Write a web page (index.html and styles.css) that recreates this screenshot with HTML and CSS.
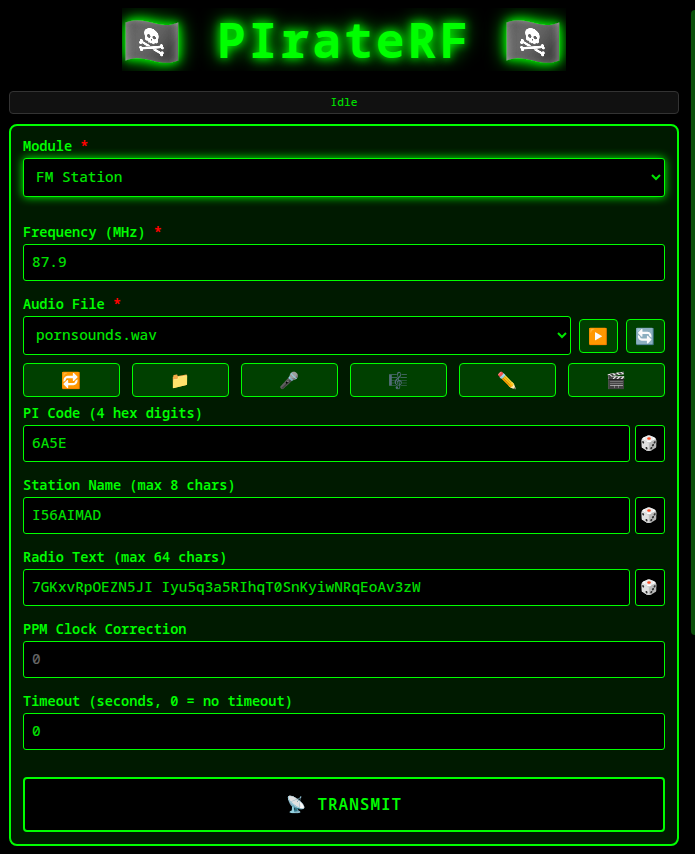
FILE: index.html
```html
<!DOCTYPE html>
<html>
<head>
  <title>PIrateRF</title>
  <link rel="stylesheet" href="styles.css">
</head>
<body>
  <header class="header">
    <h1 class="title"><span class="flag">🏴‍☠️</span> PIrateRF <span class="flag">🏴‍☠️</span></h1>
  </header>
  <div class="status">Idle</div>

  <main class="card">
    <div class="group module-group">
      <label class="label">Module <span class="req">*</span></label>
      <select class="field select glow"><option>FM Station</option></select>
    </div>

    <div class="group">
      <label class="label">Frequency (MHz) <span class="req">*</span></label>
      <input class="field" value="87.9">
    </div>

    <div class="audio-group">
      <label class="label">Audio File <span class="req">*</span></label>
      <div class="file-row">
        <select class="field select"><option>pornsounds.wav</option></select>
        <button class="action small">▶️</button>
        <button class="action small">🔄</button>
      </div>
      <div class="action-grid">
        <button class="action">🔁</button>
        <button class="action">📁</button>
        <button class="action">🎤</button>
        <button class="action">🎼</button>
        <button class="action">✏️</button>
        <button class="action">🎬</button>
      </div>
    </div>

    <div class="group">
      <label class="label">PI Code (4 hex digits)</label>
      <div class="input-row">
        <input class="field" value="6A5E">
        <button class="dice">🎲</button>
      </div>
    </div>

    <div class="group">
      <label class="label">Station Name (max 8 chars)</label>
      <div class="input-row">
        <input class="field" value="I56AIMAD">
        <button class="dice">🎲</button>
      </div>
    </div>

    <div class="group">
      <label class="label">Radio Text (max 64 chars)</label>
      <div class="input-row">
        <input class="field" value="7GKxvRpOEZN5JI Iyu5q3a5RIhqT0SnKyiwNRqEoAv3zW">
        <button class="dice">🎲</button>
      </div>
    </div>

    <div class="group">
      <label class="label">PPM Clock Correction</label>
      <input class="field" placeholder="0">
    </div>

    <div class="group">
      <label class="label">Timeout (seconds, 0 = no timeout)</label>
      <input class="field" value="0">
    </div>

    <button class="transmit">📡 TRANSMIT</button>
  </main>

  <div class="scroll-thumb"></div>
</body>
</html>
```

FILE: styles.css
```css
* {
  box-sizing: border-box;
}

html {
  background: #000;
}

body {
  margin: 0;
  padding: 0 16px 8px 9px;
  font-family: "Noto Sans Mono", "DejaVu Sans Mono", monospace;
  color: #00ff00;
}

/* HEADER */
.header {
  height: 91px;
  padding-top: 8px;
}

.title {
  width: fit-content;
  margin: 0 auto;
  overflow: hidden;
  font-size: 48px;
  line-height: 63px;
  letter-spacing: 3px;
  color: #00ff00;
  text-shadow: 0 0 10px #00ff00, 0 0 20px #00ff00;
}

.flag {
  filter: brightness(1.35);
}

.status {
  height: 23px;
  line-height: 20px;
  font-size: 11.2px;
  font-weight: 500;
  text-align: center;
  color: #00dd00;
  background: #111;
  border: 1px solid #333;
  border-radius: 4px;
}

/* MAIN CARD */
.card {
  margin-top: 10px;
  padding: 12px;
  background: #001a00;
  border: 2px solid #00ff00;
  border-radius: 8px;
}

.group {
  margin-bottom: 15px;
}

.module-group {
  margin-bottom: 27px;
}

.audio-group {
  margin-bottom: 8px;
}

.label {
  display: block;
  margin-bottom: 4px;
  font-size: 13.6px;
  font-weight: 600;
  letter-spacing: 0.02px;
  line-height: 16px;
  color: #00ff00;
}

.req {
  color: #ff0000;
  font-weight: bold;
}

/* FIELDS */
.field {
  display: block;
  width: 100%;
  height: 37px;
  padding: 8px 8px 10px;
  font-family: inherit;
  font-size: 14.4px;
  font-weight: 500;
  color: #00e000;
  background: #000;
  border: 1px solid #00ff00;
  border-radius: 3px;
  outline: none;
}

.field::placeholder {
  color: #666;
}

.select {
  height: 39px;
  padding: 7px 8px 11px;
  color: #00e600;
}

.glow {
  box-shadow: 0 0 10px #00ff00;
}

.file-row {
  display: flex;
  align-items: center;
  gap: 8px;
}

.file-row .select {
  flex: 1;
  min-width: 0;
}

.input-row {
  display: flex;
  gap: 5px;
}

.input-row .field {
  flex: 1;
  min-width: 0;
}

/* BUTTONS */
.action {
  height: 34px;
  padding: 0 2px 0 0;
  font-family: inherit;
  font-size: 16px;
  background: #004000;
  border: 1px solid #00ff00;
  border-radius: 4px;
}

.action.small {
  flex: none;
  width: 39px;
}

.action-grid {
  display: grid;
  grid-template-columns: repeat(6, 1fr);
  gap: 12px;
  margin-top: 8px;
}

.dice {
  flex: none;
  width: 30px;
  height: 37px;
  padding: 0 2px 0 0;
  font-size: 14.4px;
  background: #000;
  border: 1px solid #00ff00;
  border-radius: 3px;
}

.transmit {
  display: block;
  width: 100%;
  height: 55px;
  margin-top: 27px;
  padding: 0 0 2px;
  font-family: inherit;
  font-size: 16px;
  font-weight: 600;
  letter-spacing: 1px;
  color: #00ff00;
  background: #000;
  border: 2px solid #00ff00;
  border-radius: 4px;
}

/* SCROLLBAR THUMB */
.scroll-thumb {
  position: fixed;
  top: 10px;
  right: 0;
  width: 4px;
  height: 625px;
  background: #0a4f0a;
  border-radius: 4px 0 0 4px;
}
```
